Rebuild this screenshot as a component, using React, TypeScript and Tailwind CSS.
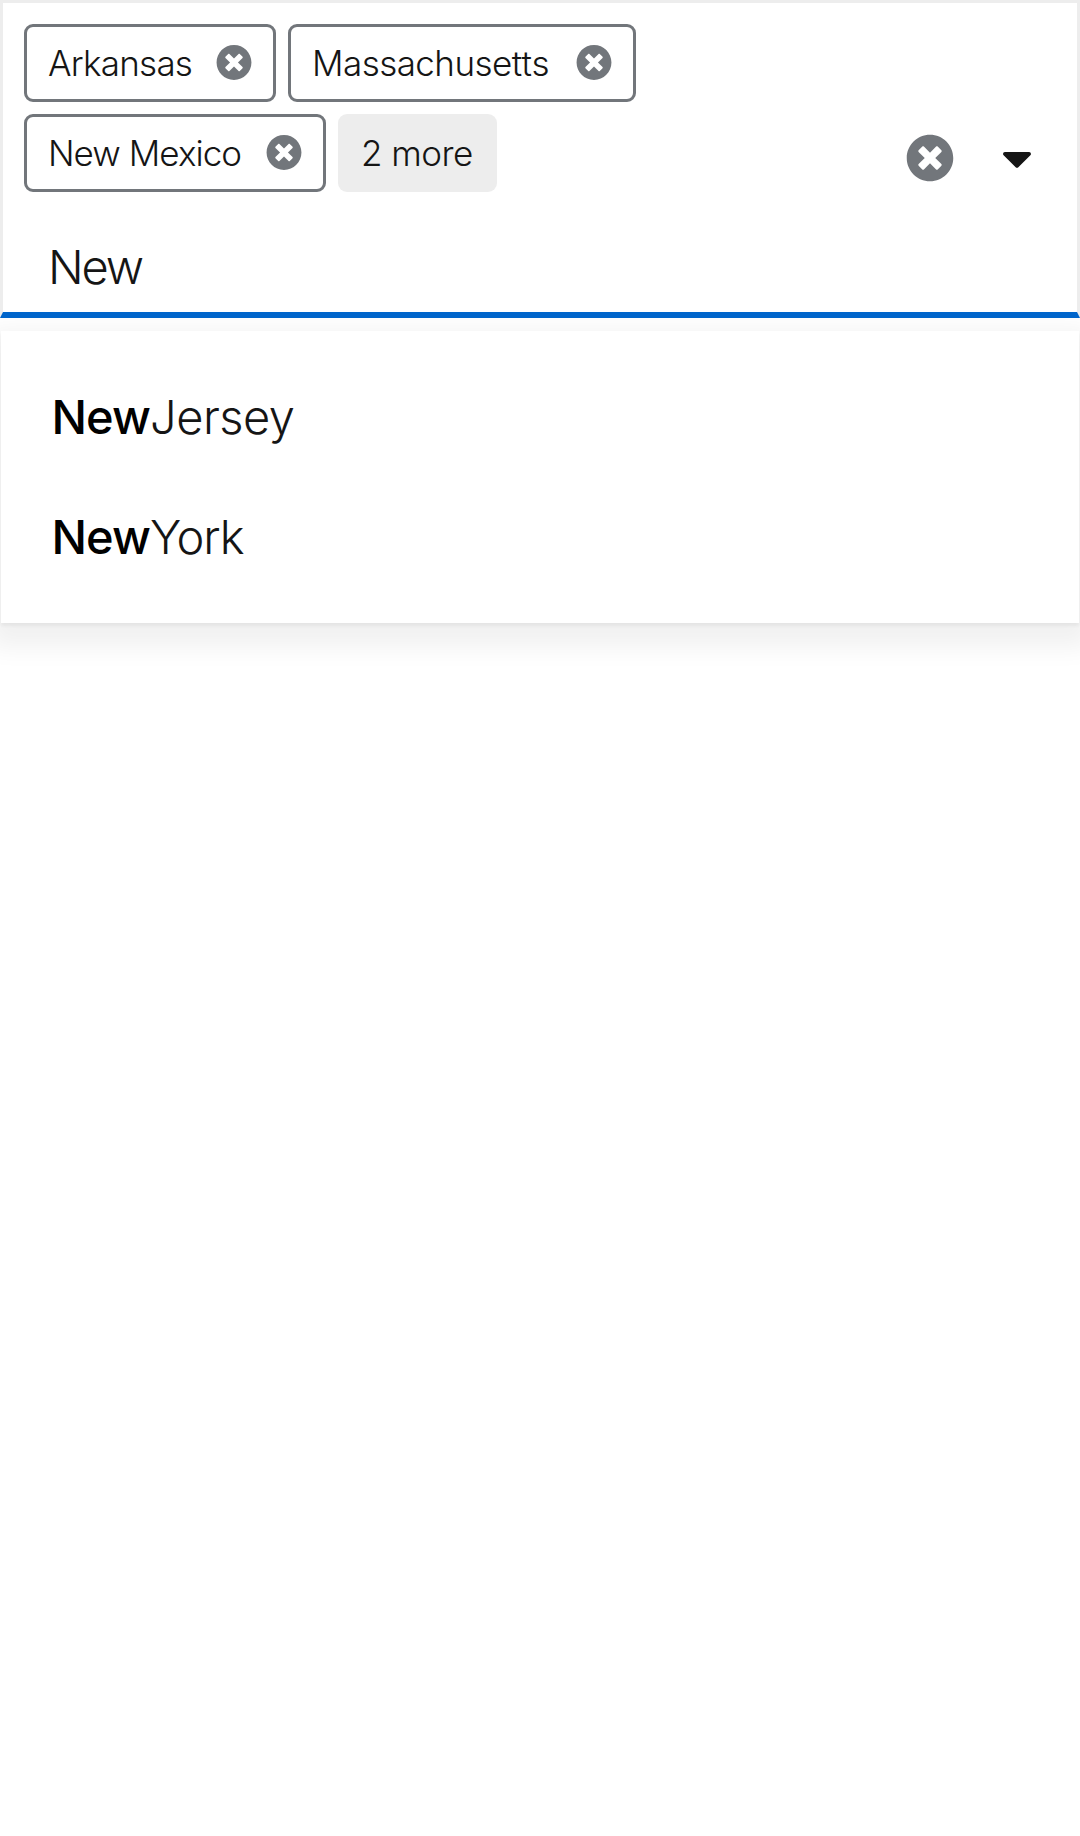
import { FaCaretDown, FaTimesCircle } from "react-icons/fa";

const chips = [
  { label: "Arkansas", box: "w-[252px]", text: "tracking-[-0.75px]" },
  { label: "Massachusetts", box: "w-[348px]", text: "tracking-[-0.55px] [font-kerning:none]" },
  { label: "New Mexico", box: "w-[302px]", text: "tracking-[-0.95px]" },
];

const options = [
  { match: "New", rest: "Jersey", text: "tracking-[-0.5px]" },
  { match: "New", rest: "York", text: "tracking-[-1.1px]" },
];

export default function App() {
  return (
    <div className="min-h-[1836px] bg-white font-['Inter',sans-serif] font-light text-[#151515]">
      <div className="flex h-[318px] border-[3px] border-b-[6px] border-[#ededed] border-b-[#0066cc]">
        <div className="flex w-[720px] flex-col">
          <div className="flex flex-wrap gap-3 pt-[21px] pl-[21px] text-[35px]">
            {chips.map((chip) => (
              <div
                key={chip.label}
                className={`flex h-[78px] items-center justify-between rounded-[9px] border-[3px] border-[#72767b] pr-[21px] pl-[21px] ${chip.box}`}
              >
                <span className={`whitespace-nowrap leading-[54px] ${chip.text}`}>{chip.label}</span>
                <button aria-label={`Remove ${chip.label}`} className="mb-[2px] shrink-0 text-[#72767b]">
                  <FaTimesCircle className="size-9 translate-y-[0.5px]" />
                </button>
              </div>
            ))}
            <button className="flex h-[78px] w-[159px] items-center rounded-[9px] bg-[#ededed] pl-[23px] leading-[54px] tracking-[-0.5px] whitespace-nowrap">
              2 more
            </button>
          </div>
          <input
            aria-label="Filter states"
            defaultValue="New"
            className="mt-[29px] h-[90px] w-full bg-transparent pl-[45px] text-[47px] tracking-[-2.2px] outline-none"
          />
        </div>
        <div className="flex flex-1 items-center justify-end pr-[36px]">
          <button aria-label="Clear all" className="mr-[39px] text-[#72767b]">
            <FaTimesCircle className="size-12" />
          </button>
          <button aria-label="Toggle options">
            <FaCaretDown className="size-12" />
          </button>
        </div>
      </div>
      <ul className="mx-px mt-[13px] h-[292px] bg-white pt-[26px] text-[47px] shadow-[0_3px_3px_0_rgba(3,3,3,0.05),0_12px_24px_12px_rgba(3,3,3,0.06)]">
        {options.map((option) => (
          <li key={option.rest} className="flex h-[120px] items-center pl-[50.5px] leading-[72px]">
            <span className="w-[98.5px] font-medium tracking-[-1px] text-black">{option.match}</span>
            <span className={option.text}>{option.rest}</span>
          </li>
        ))}
      </ul>
    </div>
  );
}
